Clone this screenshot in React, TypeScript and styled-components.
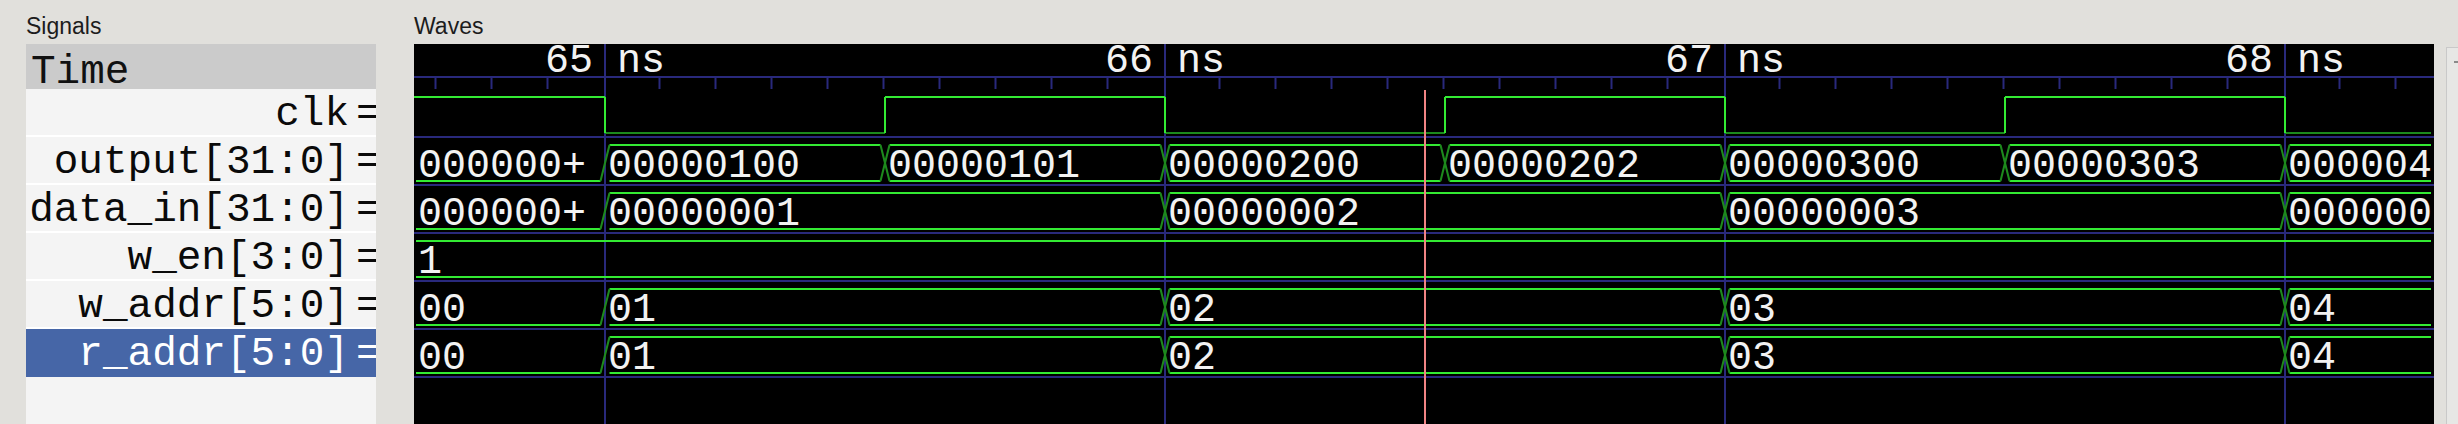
import React from 'react';
import styled, { createGlobalStyle } from 'styled-components';

const GlobalStyle = createGlobalStyle`
  html, body {
    margin: 0;
    padding: 0;
    background: #e1e0dc;
    overflow: hidden;
  }
`;

interface Signal {
  name: string;
  bit?: boolean;
  values: string[];
  changes: number[];
  openStart?: boolean;
  selected?: boolean;
}

const CANVAS_W = 2020;
const CANVAS_H = 380;
const LINE_START = 2;
const LINE_END = 2017;
const RULER_Y = 33;
const ROW_TOP = 45;
const ROW_H = 48;
const HALF_X = 4.5;
const CURSOR_X = 1011;
const LABEL_GAP = 12;

const MAJORS = [191, 751, 1311, 1871];
const MAJOR_NS = ['65', '66', '67', '68'];
const CLK_EDGES = [191, 471, 751, 1031, 1311, 1591, 1871];
const ADDR_EDGES = [191, 751, 1311, 1871];

const signals: Signal[] = [
  { name: 'clk', bit: true, values: [], changes: CLK_EDGES },
  {
    name: 'output[31:0]',
    values: ['000000+', '00000100', '00000101', '00000200', '00000202', '00000300', '00000303', '000004'],
    changes: CLK_EDGES,
    openStart: true,
  },
  {
    name: 'data_in[31:0]',
    values: ['000000+', '00000001', '00000002', '00000003', '000000'],
    changes: ADDR_EDGES,
    openStart: true,
  },
  { name: 'w_en[3:0]', values: ['1'], changes: [] },
  { name: 'w_addr[5:0]', values: ['00', '01', '02', '03', '04'], changes: ADDR_EDGES, openStart: true },
  {
    name: 'r_addr[5:0]',
    values: ['00', '01', '02', '03', '04'],
    changes: ADDR_EDGES,
    openStart: true,
    selected: true,
  },
];

const COLORS = {
  grid: '#29297c',
  wave: '#33ea33',
  waveDim: '#1d8a1d',
  text: '#f2f2f2',
  cursor: '#f08383',
};

const Window = styled.div`
  display: flex;
  width: 2458px;
  height: 424px;
  padding-left: 26px;
  box-sizing: border-box;
  background: #e1e0dc;
  overflow: hidden;
`;

const Pane = styled.div<{ $width: number; $gap?: number }>`
  display: flex;
  flex-direction: column;
  width: ${p => p.$width}px;
  margin-left: ${p => p.$gap ?? 0}px;
  flex-shrink: 0;
`;

const PaneLabel = styled.div`
  height: 44px;
  display: flex;
  align-items: flex-end;
  padding-bottom: 4px;
  box-sizing: border-box;
  font-family: 'Liberation Sans', Arial, sans-serif;
  font-size: 23px;
  color: #1c1c1c;
`;

const SignalList = styled.div`
  flex: 1;
  background: #f4f4f4;
  overflow: hidden;
`;

const TimeHeader = styled.div`
  height: 45px;
  padding: 12px 0 0 5px;
  box-sizing: border-box;
  background: #cbcbcb;
  font-family: 'Liberation Mono', 'Courier New', monospace;
  font-size: 41px;
  line-height: 33px;
  color: #111;
`;

const SignalRow = styled.div<{ $selected?: boolean }>`
  display: flex;
  width: 350px;
  height: ${ROW_H}px;
  padding-top: 5px;
  box-sizing: border-box;
  border-bottom: 2px solid ${p => (p.$selected ? '#4666a7' : '#ffffff')};
  background: ${p => (p.$selected ? '#4666a7' : 'transparent')};
  color: ${p => (p.$selected ? '#ffffff' : '#0a0a0a')};
  font-family: 'Liberation Mono', 'Courier New', monospace;
  font-size: 41px;
  line-height: 41px;
  white-space: pre;
`;

const SignalName = styled.span`
  flex: 1;
  min-width: 0;
  text-align: right;
  padding-right: 7px;
`;

/* the '=' sits in a fixed column, squeezed so its box ends at the pane edge */
const Equals = styled.span`
  width: 20px;
  flex-shrink: 0;
  letter-spacing: -5px;
`;

const WaveCanvas = styled.div`
  flex: 1;
  background: #000;
  overflow: hidden;

  svg {
    display: block;
  }
`;

const ScrollTrack = styled.div`
  margin: 47px 0 0 12px;
  flex: 1;
  border-left: 1px solid #c9c9c9;
  border-top: 1px solid #c9c9c9;
  background: #e7e7e5;
  position: relative;
`;

const ScrollArrow = styled.div`
  position: absolute;
  top: 13px;
  left: 7px;
  width: 4px;
  height: 2px;
  background: #8a8a8a;
`;

const rowTop = (i: number) => ROW_TOP + ROW_H * i;

const ClockWave: React.FC<{ index: number; edges: number[] }> = ({ index, edges }) => {
  const hi = rowTop(index) + 8;
  const lo = rowTop(index) + 44;
  const bounds = [0, ...edges, LINE_END];
  return (
    <g strokeWidth={2} fill="none">
      {bounds.slice(0, -1).map((x, j) => {
        const high = j % 2 === 0;
        return (
          <line
            key={`s${j}`}
            x1={x}
            x2={bounds[j + 1]}
            y1={high ? hi : lo}
            y2={high ? hi : lo}
            stroke={high ? COLORS.wave : COLORS.waveDim}
          />
        );
      })}
      {edges.map(x => (
        <line key={`e${x}`} x1={x} x2={x} y1={hi} y2={lo} stroke={COLORS.wave} />
      ))}
    </g>
  );
};

const BusWave: React.FC<{ index: number; signal: Signal }> = ({ index, signal }) => {
  const top = rowTop(index) + 8;
  const bot = rowTop(index) + 44;
  const bounds = [LINE_START, ...signal.changes, LINE_END];
  const last = bounds.length - 2;
  return (
    <g>
      {signal.values.map((v, j) => {
        const left = j === 0 ? bounds[j] : bounds[j] + HALF_X;
        const right = j === last ? bounds[j + 1] : bounds[j + 1] - HALF_X;
        const showTop = !(j === 0 && signal.openStart);
        return (
          <g key={j}>
            {showTop && <line x1={left} x2={right} y1={top} y2={top} stroke={COLORS.wave} strokeWidth={2} />}
            <line x1={left} x2={right} y1={bot} y2={bot} stroke={COLORS.wave} strokeWidth={2} />
            <text x={j === 0 ? 4 : bounds[j] + 3} y={rowTop(index) + 40} fill={COLORS.text}>
              {v}
            </text>
          </g>
        );
      })}
      {signal.changes.map((t, j) => (
        <g key={`x${t}`} stroke={COLORS.waveDim} strokeWidth={2}>
          <line x1={t - HALF_X} y1={bot} x2={t + HALF_X} y2={top} />
          {!(j === 0 && signal.openStart) && <line x1={t - HALF_X} y1={top} x2={t + HALF_X} y2={bot} />}
        </g>
      ))}
    </g>
  );
};

const minorTicks = (): number[] => {
  const ticks: number[] = [];
  [MAJORS[0] - 560, ...MAJORS].forEach(m => {
    for (let k = 1; k < 10; k++) {
      const x = m + 56 * k - 1.5;
      if (x > 0 && x < CANVAS_W) ticks.push(x);
    }
  });
  return ticks;
};

const Waves: React.FC = () => (
  <svg
    width={CANVAS_W}
    height={CANVAS_H}
    fontFamily="'Liberation Mono', 'Courier New', monospace"
    fontSize={40}
  >
    {/* ruler */}
    <line x1={0} x2={CANVAS_W} y1={RULER_Y} y2={RULER_Y} stroke={COLORS.grid} strokeWidth={2} />
    {minorTicks().map(x => (
      <line key={x} x1={x} x2={x} y1={RULER_Y} y2={RULER_Y + 12} stroke={COLORS.grid} strokeWidth={2} />
    ))}
    {MAJORS.map((x, i) => (
      <g key={x} fill={COLORS.text}>
        <line x1={x} x2={x} y1={0} y2={CANVAS_H} stroke={COLORS.grid} strokeWidth={2} />
        <text x={x - LABEL_GAP} y={28} textAnchor="end">
          {MAJOR_NS[i]}
        </text>
        <text x={x + LABEL_GAP} y={28}>
          ns
        </text>
      </g>
    ))}

    {/* row separators */}
    {signals.map((_, i) => (
      <line
        key={i}
        x1={0}
        x2={CANVAS_W}
        y1={rowTop(i) + ROW_H}
        y2={rowTop(i) + ROW_H}
        stroke={COLORS.grid}
        strokeWidth={2}
      />
    ))}

    {signals.map((s, i) =>
      s.bit ? <ClockWave key={s.name} index={i} edges={s.changes} /> : <BusWave key={s.name} index={i} signal={s} />
    )}

    {/* marker */}
    <line x1={CURSOR_X} x2={CURSOR_X} y1={46} y2={CANVAS_H} stroke={COLORS.cursor} strokeWidth={2} />
  </svg>
);

const App: React.FC = () => (
  <>
    <GlobalStyle />
    <Window>
      <Pane $width={350}>
        <PaneLabel>Signals</PaneLabel>
        <SignalList>
          <TimeHeader>Time</TimeHeader>
          {signals.map(s => (
            <SignalRow key={s.name} $selected={s.selected}>
              <SignalName>{s.name}</SignalName>
              <Equals>=</Equals>
            </SignalRow>
          ))}
        </SignalList>
      </Pane>
      <Pane $width={CANVAS_W} $gap={38}>
        <PaneLabel>Waves</PaneLabel>
        <WaveCanvas>
          <Waves />
        </WaveCanvas>
      </Pane>
      <ScrollTrack>
        <ScrollArrow />
      </ScrollTrack>
    </Window>
  </>
);

export default App;
